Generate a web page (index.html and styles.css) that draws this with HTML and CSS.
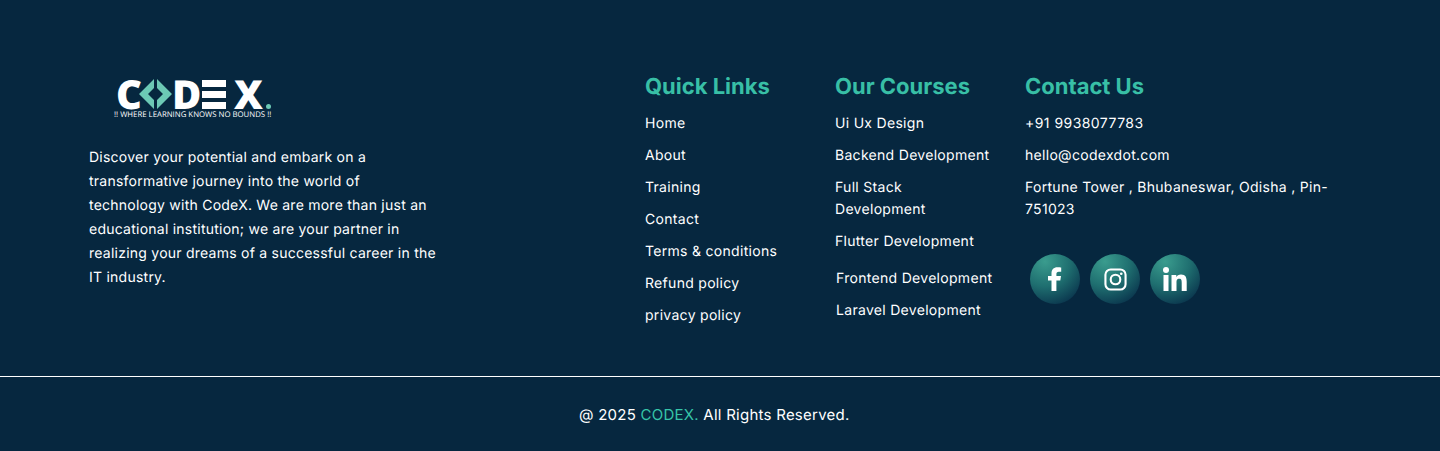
FILE: index.html
```html
<!DOCTYPE html>
<html lang="en">
<head>
    <meta charset="UTF-8">
    <meta name="viewport" content="width=device-width, initial-scale=1.0">
    <title>CodeX Footer</title>
    <link rel="stylesheet" href="styles.css">
</head>
<body>

    <footer class="footer">
        <div class="footer-top">
            <div class="about">
                <div class="logo">
                    <div class="logo-mark">
                        <span class="logo-letter logo-c">C</span>
                        <svg class="logo-arrows" viewBox="0 0 33 30" width="33" height="30">
                            <path d="M15 0 L0 15 L15 30 L15 21 L9 15 L15 9 Z" fill="#6cc9b5"/>
                            <path d="M18 0 L33 15 L18 30 L18 21 L24 15 L18 9 Z" fill="#6cc9b5"/>
                        </svg>
                        <span class="logo-letter logo-d">D</span>
                        <span class="logo-bars"><i></i><i></i><i></i></span>
                        <span class="logo-letter logo-x">X</span>
                        <span class="logo-dot"></span>
                    </div>
                    <div class="logo-tag">!! WHERE LEARNING KNOWS NO BOUNDS !!</div>
                </div>
                <p>Discover your potential and embark on a transformative journey into the world of technology with CodeX. We are more than just an educational institution; we are your partner in realizing your dreams of a successful career in the IT industry.</p>
            </div>

            <div class="col col-links">
                <h3>Quick Links</h3>
                <ul>
                    <li>Home</li>
                    <li>About</li>
                    <li>Training</li>
                    <li>Contact</li>
                    <li>Terms &amp; conditions</li>
                    <li>Refund policy</li>
                    <li>privacy policy</li>
                </ul>
            </div>

            <div class="col col-courses">
                <h3>Our Courses</h3>
                <ul class="courses-main">
                    <li>Ui Ux Design</li>
                    <li>Backend Development</li>
                    <li>Full Stack Development</li>
                    <li>Flutter Development</li>
                </ul>
                <ul class="courses-extra">
                    <li>Frontend Development</li>
                    <li>Laravel Development</li>
                </ul>
            </div>

            <div class="col col-contact">
                <h3>Contact Us</h3>
                <ul>
                    <li class="phone">+91 9938077783</li>
                    <li>hello@codexdot.com</li>
                    <li>Fortune Tower , Bhubaneswar, Odisha , Pin-751023</li>
                </ul>
                <div class="social">
                    <a class="social-btn" href="#" aria-label="Facebook">
                        <svg viewBox="0 0 16 24" width="16" height="24"><path fill="#fff" d="M4.500 24V13.500H1V9h3.500V6.300C4.500 2.400 6.800.2 10.300.2c1.700 0 3.300.2 3.900.3v4.200h-2.400c-1.900 0-2.400 1-2.400 2.300V9h4.600l-.7 4.500H9.400V24z"/></svg>
                    </a>
                    <a class="social-btn" href="#" aria-label="Instagram">
                        <svg viewBox="0 0 24 24" width="23" height="23" fill="none" stroke="#fff" stroke-width="2.200"><rect x="1.500" y="1.500" width="21" height="21" rx="5.500"/><circle cx="12" cy="12" r="5"/><circle cx="18" cy="6" r="1.400" fill="#fff" stroke="none"/></svg>
                    </a>
                    <a class="social-btn" href="#" aria-label="LinkedIn">
                        <svg viewBox="0 0 24 24" width="24" height="24"><circle cx="3" cy="3" r="3" fill="#fff"/><path fill="#fff" d="M.500 8h5v16h-5zM8.500 8h4.800v2.200C14 8.800 15.700 7.600 18 7.600c4.800 0 5.700 3.200 5.700 7.200V24h-5v-8.100c0-1.900 0-4.100-2.500-4.100s-2.700 1.900-2.700 4V24h-5z"/></svg>
                    </a>
                </div>
            </div>
        </div>

        <div class="footer-bottom">
            @ 2025 <span class="brand">CODEX.</span> All Rights Reserved.
        </div>
    </footer>

</body>
</html>
```

FILE: styles.css
```css
* {
    box-sizing: border-box;
}
body {
    margin: 0;
    background: #06273f;
    color: #fff;
    font-family: Inter, "Liberation Sans", sans-serif;
    text-rendering: geometricPrecision;
}
.footer {
    height: 451px;
    background: #06273f;
}
.footer-top {
    display: flex;
    height: 376px;
    padding: 73px 0 0 89px;
}
.about {
    width: 556px;
}
.about p {
    width: 350px;
    margin: 0;
    font-size: 14px;
    letter-spacing: 0.24px;
    line-height: 24px;
}
.logo {
    height: 73px;
    padding: 6px 0 0 25px;
}
.logo-mark {
    display: flex;
    align-items: center;
    height: 30px;
    margin-left: 2px;
}
.logo-letter {
    display: block;
    font-family: "Open Sans", sans-serif;
    font-size: 40px;
    font-weight: 800;
    line-height: 30px;
}
.logo-c {
    width: 23px;
}
.logo-d {
    width: 30px;
}
.logo-bars {
    display: flex;
    flex-direction: column;
    justify-content: space-between;
    width: 24px;
    height: 29px;
    margin: 0 8px 0 0;
}
.logo-bars i {
    display: block;
    height: 7px;
    background: #fff;
}
.logo-dot {
    width: 5px;
    height: 5px;
    margin: 24px 0 0 3px;
    border-radius: 50%;
    background: #6cc9b5;
}
.logo-tag {
    margin: 2px 0 0 0;
    font-family: "Open Sans", sans-serif;
    font-size: 7.8px;
    line-height: 9px;
    white-space: nowrap;
}
.col {
    width: 190px;
}
.col-contact {
    width: 310px;
}
.col h3 {
    margin: 0 0 12px;
    height: 28px;
    font-size: 22px;
    font-weight: 700;
    line-height: 28px;
    color: #38bfa6;
}
.col ul {
    margin: 0;
    padding: 0;
    list-style: none;
}
.col li {
    margin-bottom: 10px;
    font-size: 14px;
    letter-spacing: 0.3px;
    line-height: 22px;
}
.col li.phone {
    letter-spacing: 0.45px;
}
.courses-main {
    width: 158px;
}
.col .courses-extra {
    margin: 15px 0 0 1px;
    white-space: nowrap;
}
.social {
    display: flex;
    gap: 10px;
    margin: 33px 0 0 5px;
}
.social-btn {
    display: flex;
    align-items: center;
    justify-content: center;
    width: 50px;
    height: 50px;
    border-radius: 50%;
    background: radial-gradient(circle at 30% 15%, #3a9c8e 0%, #1f6f70 45%, #08304a 88%);
}
.footer-bottom {
    border-top: 1px solid #fff;
    padding: 28px 0 0 579px;
    font-size: 15px;
    letter-spacing: 0.25px;
    line-height: 20px;
}
.brand {
    color: #36c5a9;
}
```
